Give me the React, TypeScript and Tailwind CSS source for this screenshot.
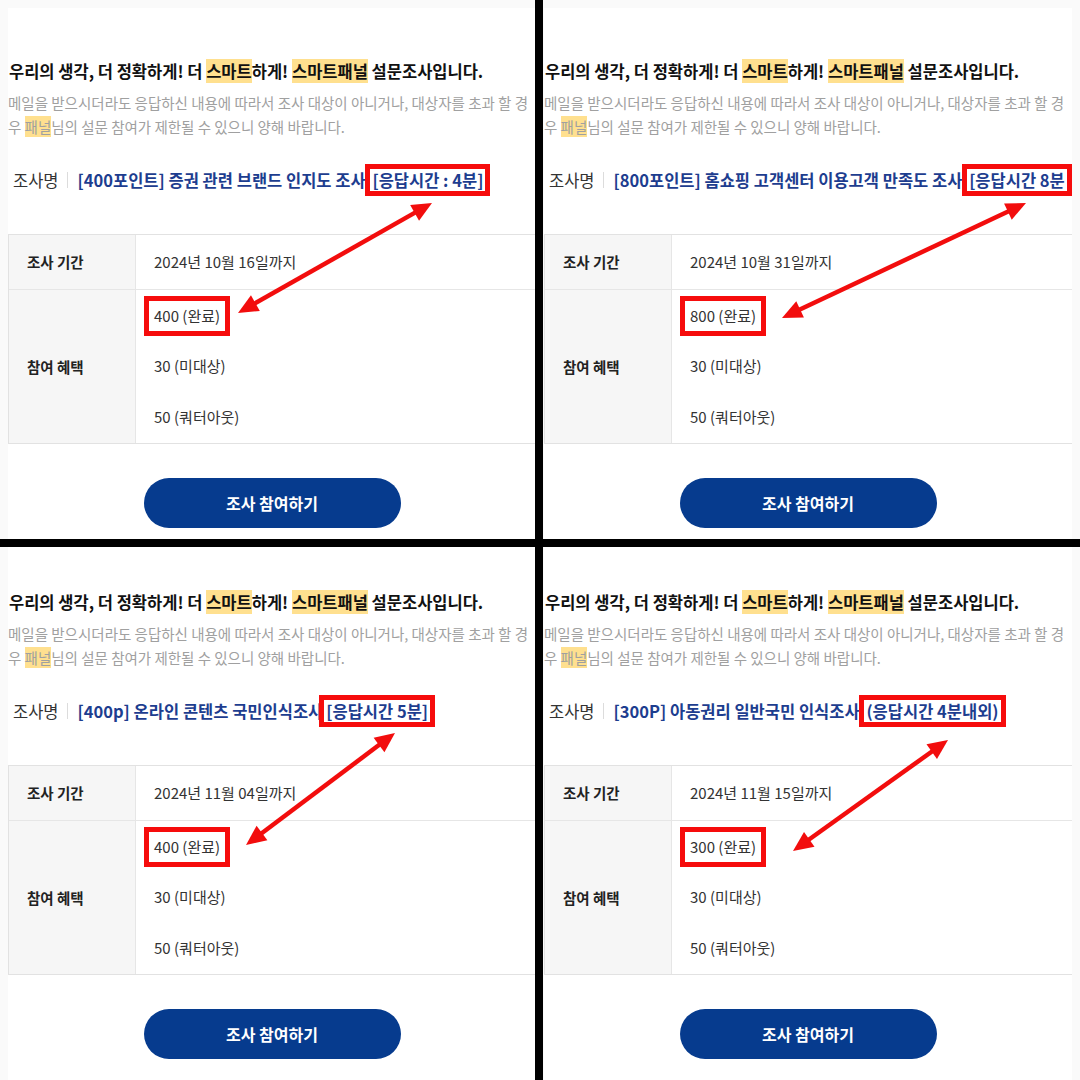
type PanelProps = {
  side: "left" | "right";
  top: number;
  title: string;
  boxed: string;
  date: string;
  points: string;
};

const KR = "font-['Noto_Sans_CJK_KR','Noto_Sans',sans-serif]";

function Panel({ side, top, title, boxed, date, points }: PanelProps) {
  return (
    <div className="relative overflow-hidden bg-[#fafafa]">
      <div
        className={
          (side === "left" ? "ml-[8px] " : "ml-[1px] ") +
          (top > 45 ? "mt-[8px] pt-[51px] " : "pt-[43px] ") +
          "w-[528px] h-full bg-white"
        }
      >
        <h2 className="pl-[1px] text-[16.5px] leading-[24px] font-bold text-[#111] whitespace-nowrap">
          우리의 생각, 더 정확하게! 더 <mark className="bg-[#ffe08f] text-[#111]">스마트</mark>하게!{" "}
          <mark className="bg-[#ffe08f] text-[#111]">스마트패널</mark> 설문조사입니다.
        </h2>
        <p className="mt-[8px] text-[14.5px] leading-[24px] text-[#a0a0a0] whitespace-nowrap">
          메일을 받으시더라도 응답하신 내용에 따라서 조사 대상이 아니거나, 대상자를 초과 할 경
          <br />우 <mark className="bg-[#ffe08f] text-[#a0a0a0]">패널</mark>님의 설문 참여가 제한될 수 있으니 양해 바랍니다.
        </p>

        <div className="mt-[26px] h-[30px] flex items-center pl-[5px] whitespace-nowrap">
          <span className="text-[16.5px] text-[#333]">조사명</span>
          <span className="ml-[8px] mr-[10px] w-px h-[16px] bg-[#dcdcdc]" />
          <span className="text-[16.5px] font-bold text-[#1d3d8f]">
            {title}
            <span className="inline-block leading-[24px] outline-[5px] outline-solid outline-[#f60c0c] outline-offset-[-1px] px-[3px]">
              {boxed}
            </span>
          </span>
        </div>

        <div className="mt-[39px] border border-r-0 border-[#e2e2e2] text-[15px] text-[#333]">
          <div className="flex h-[54px]">
            <div className="w-[127px] shrink-0 bg-[#f6f6f6] border-r border-[#e6e6e6] flex items-center pl-[18px] text-[14.5px] font-bold text-[#222]">
              조사 기간
            </div>
            <div className="flex items-center pl-[18px]">{date}</div>
          </div>
          <div className="flex border-t border-[#e6e6e6]">
            <div className="w-[127px] shrink-0 bg-[#f6f6f6] border-r border-[#e6e6e6] flex items-center pl-[18px] text-[14.5px] font-bold text-[#222]">
              참여 혜택
            </div>
            <div className="flex flex-col pl-[18px]">
              <div className="h-[51px] flex items-center">
                <span className="inline-block leading-[20px] outline-[5px] outline-solid outline-[#f60c0c] outline-offset-[5px]">
                  {points} (완료)
                </span>
              </div>
              <div className="h-[51px] flex items-center">30 (미대상)</div>
              <div className="h-[51px] flex items-center">50 (쿼터아웃)</div>
            </div>
          </div>
        </div>

        <div className="mt-[34px] flex justify-center">
          <button className="w-[257px] h-[50px] rounded-full bg-[#063b8e] text-white text-[16px] font-bold">
            조사 참여하기
          </button>
        </div>
      </div>
    </div>
  );
}

function Arrow({ x1, y1, x2, y2 }: { x1: number; y1: number; x2: number; y2: number }) {
  const dx = x2 - x1;
  const dy = y2 - y1;
  const len = Math.hypot(dx, dy);
  const ux = dx / len;
  const uy = dy / len;
  const L = 20;
  const W = 9;
  const head = (tx: number, ty: number, dir: number) => {
    const bx = tx - ux * L * dir;
    const by = ty - uy * L * dir;
    return `${tx},${ty} ${bx - uy * W},${by + ux * W} ${bx + uy * W},${by - ux * W}`;
  };
  return (
    <g fill="#f20d0d">
      <line
        x1={x1 + ux * (L - 2)}
        y1={y1 + uy * (L - 2)}
        x2={x2 - ux * (L - 2)}
        y2={y2 - uy * (L - 2)}
        stroke="#f20d0d"
        strokeWidth="4.5"
      />
      <polygon points={head(x1, y1, -1)} />
      <polygon points={head(x2, y2, 1)} />
    </g>
  );
}

export default function App() {
  return (
    <div className={"relative w-[1080px] h-[1080px] bg-black " + KR}>
      <div className="grid grid-cols-[535px_537px] grid-rows-[539px_533px] gap-[8px] h-full">
        <Panel
          side="left"
          top={51}
          title="[400포인트] 증권 관련 브랜드 인지도 조사 "
          boxed="[응답시간 : 4분]"
          date="2024년 10월 16일까지"
          points="400"
        />
        <Panel
          side="right"
          top={51}
          title="[800포인트] 홈쇼핑 고객센터 이용고객 만족도 조사 "
          boxed="[응답시간 8분"
          date="2024년 10월 31일까지"
          points="800"
        />
        <Panel
          side="left"
          top={43}
          title="[400p] 온라인 콘텐츠 국민인식조사"
          boxed="[응답시간 5분]"
          date="2024년 11월 04일까지"
          points="400"
        />
        <Panel
          side="right"
          top={43}
          title="[300P] 아동권리 일반국민 인식조사 "
          boxed="(응답시간 4분내외)"
          date="2024년 11월 15일까지"
          points="300"
        />
      </div>
      <svg className="absolute inset-0 pointer-events-none" width="1080" height="1080">
        <Arrow x1={238} y1={313} x2={432} y2={203} />
        <Arrow x1={782} y1={318} x2={1026} y2={203} />
        <Arrow x1={246} y1={845} x2={395} y2={733} />
        <Arrow x1={793} y1={851} x2={948} y2={740} />
      </svg>
    </div>
  );
}
